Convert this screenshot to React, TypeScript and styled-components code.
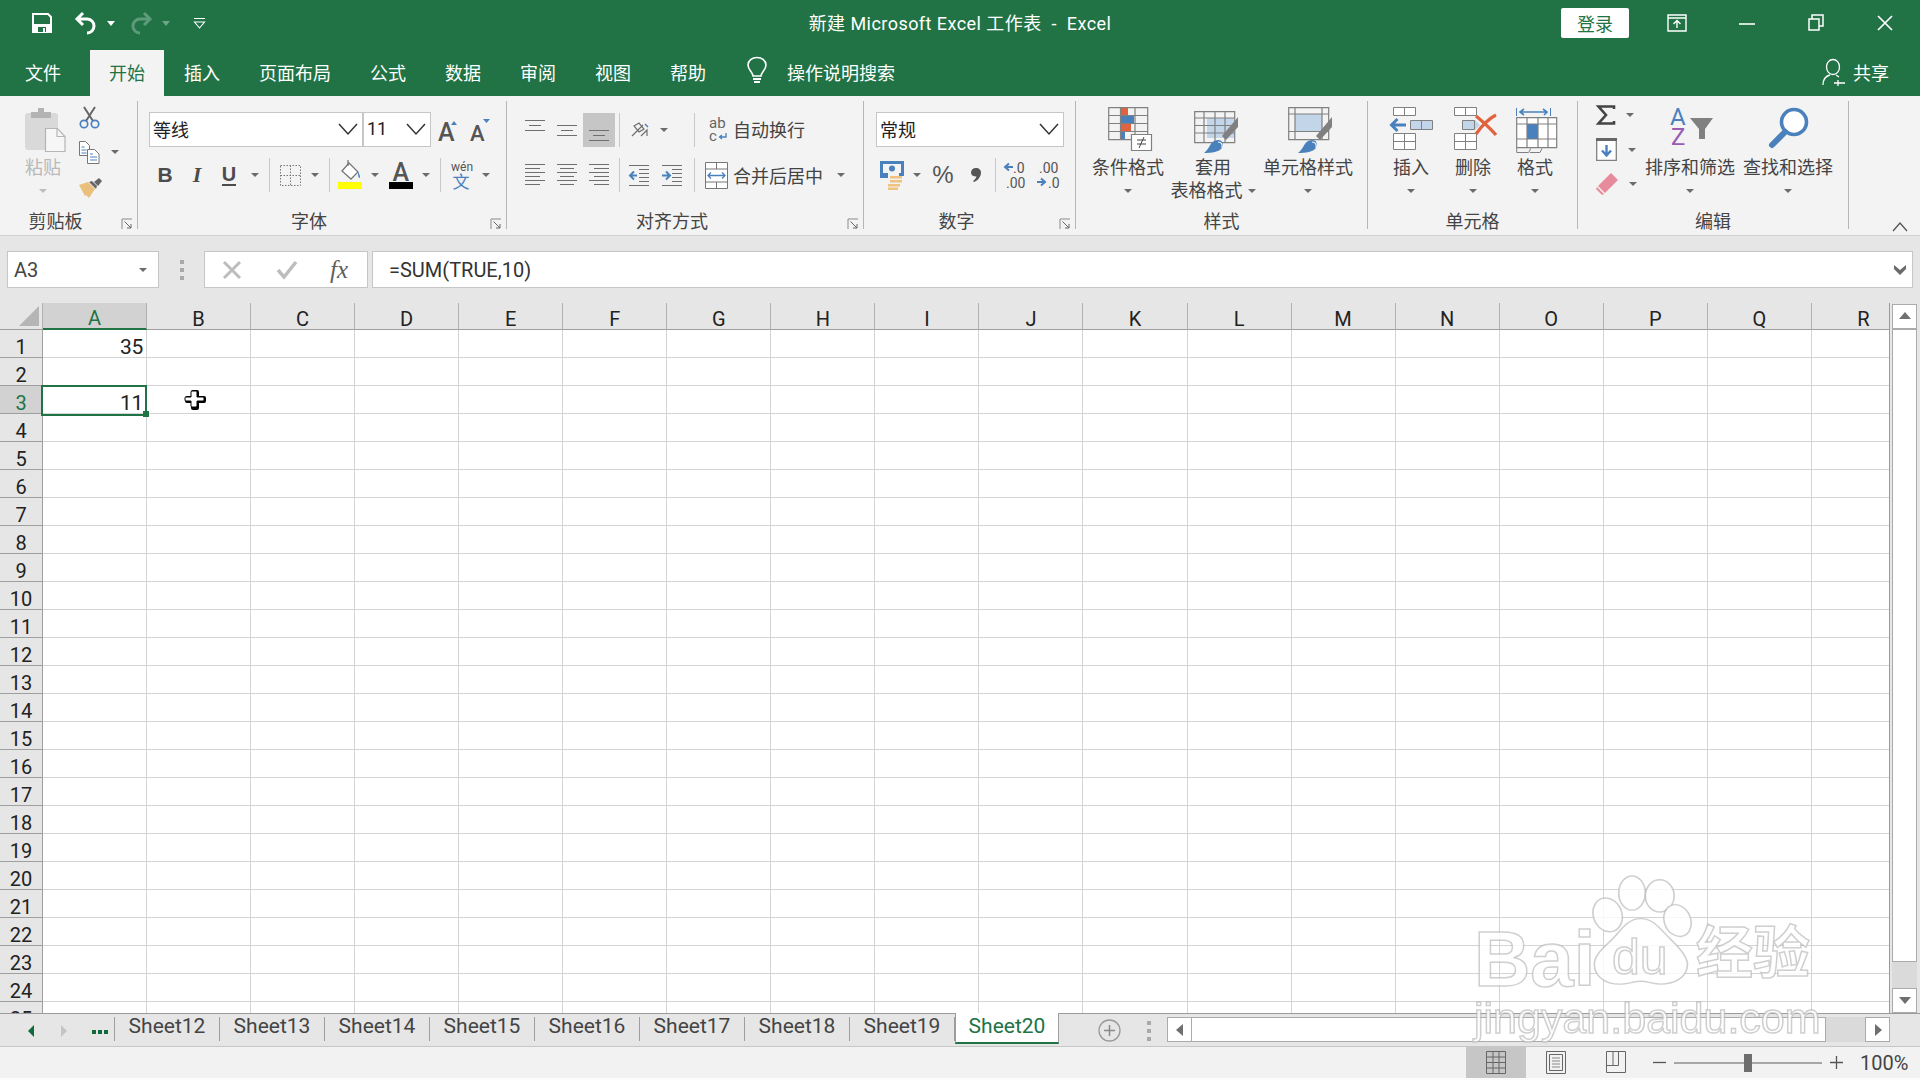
import React from 'react';
import styled, { createGlobalStyle } from 'styled-components';

const GREEN = '#217346';
const BLUE = '#4a81bd';
const PALE = '#c3d5e9';
const GREY = '#808080';
const DARK = '#444444';
const ORANGE = '#e0623f';
const FONT = `Roboto, "Noto Sans CJK SC", sans-serif`;

const COLUMNS = 'ABCDEFGHIJKLMNOPQR'.split('');
const ROWS = Array.from({ length: 25 }, (_, i) => i + 1);
const SHEETS = [12, 13, 14, 15, 16, 17, 18, 19, 20];
const VALUES: Record<string, string> = { A1: '35', A3: '11' };

const GlobalStyle = createGlobalStyle`
  html, body { margin: 0; padding: 0; background: #fff; }
  * { box-sizing: border-box; }
  svg { overflow: visible; }
`;

const Window = styled.div`
  position: relative;
  width: 1920px;
  height: 1080px;
  overflow: hidden;
  display: flex;
  flex-direction: column;
  background: #fbfbfb;
  font-family: ${FONT};
  color: ${DARK};
`;

/* title bar */
const TitleBar = styled.div`
  height: 50px;
  display: grid;
  grid-template-columns: 1fr auto 1fr;
  align-items: center;
  background: ${GREEN};
  color: #fff;
`;
const QuickAccess = styled.div`
  display: flex;
  align-items: center;
  padding-left: 32px;
  padding-bottom: 4px;
`;
const QuickSlot = styled.span<{ $ml?: number }>`
  display: flex;
  margin-left: ${(p) => p.$ml ?? 0}px;
`;
const WhiteCaret = styled.span<{ $ml: number; $dim?: boolean }>`
  margin-left: ${(p) => p.$ml}px;
  border-left: 4px solid transparent;
  border-right: 4px solid transparent;
  border-top: 5px solid ${(p) => (p.$dim ? '#6da58a' : '#fff')};
`;
const Title = styled.div`
  font-size: 18px;
  letter-spacing: 0.45px;
  white-space: pre;
  padding-bottom: 6px;
`;
const WindowControls = styled.div`
  display: flex;
  align-items: center;
  justify-content: flex-end;
  padding-right: 27px;
  padding-bottom: 5px;
`;
const SignIn = styled.button`
  width: 68px;
  height: 30px;
  margin-right: 38px;
  border: 0;
  border-radius: 2px;
  background: #fff;
  color: ${GREEN};
  font: 18px ${FONT};
  padding: 0;
`;
const ControlSlot = styled.span<{ $w: number }>`
  display: flex;
  justify-content: center;
  width: ${(p) => p.$w}px;
`;

/* ribbon tabs */
const TabRow = styled.div`
  height: 46px;
  display: flex;
  align-items: stretch;
  padding-left: 6px;
  background: ${GREEN};
  color: #fff;
  font-size: 18px;
`;
const RibbonTab = styled.div<{ $active?: boolean; $ml?: number }>`
  display: flex;
  align-items: center;
  justify-content: center;
  padding: 0 19px 3px;
  margin-left: ${(p) => p.$ml ?? 0}px;
  margin-right: 1px;
  background: ${(p) => (p.$active ? '#f3f3f3' : 'transparent')};
  color: ${(p) => (p.$active ? GREEN : '#fff')};
`;
const TellMe = styled.div`
  display: flex;
  align-items: center;
  gap: 20px;
  margin-left: 21px;
  padding-bottom: 3px;
`;
const Share = styled.div`
  display: flex;
  align-items: center;
  gap: 8px;
  margin-left: auto;
  margin-right: 31px;
  padding-bottom: 3px;
`;

/* ribbon */
const Ribbon = styled.div`
  position: relative;
  height: 140px;
  display: flex;
  padding: 5px 0 6px;
  background: #f3f3f3;
  border-bottom: 1px solid #d2d2d2;
`;
const Group = styled.section<{ $w: number }>`
  width: ${(p) => p.$w}px;
  display: flex;
  flex-direction: column;
  border-right: 1px solid #b6b6b6;
`;
const GroupBody = styled.div<{ $pl?: number; $row?: boolean }>`
  flex: 1;
  min-height: 0;
  display: flex;
  flex-direction: ${(p) => (p.$row ? 'row' : 'column')};
  padding-left: ${(p) => p.$pl ?? 0}px;
`;
const GroupFooter = styled.div`
  height: 14px;
  display: flex;
  align-items: center;
`;
const GroupLabel = styled.div`
  flex: 1;
  text-align: center;
  font-size: 18px;
  line-height: 14px;
  color: #444;
`;
const Launcher = styled.div`
  width: 26px;
  padding-left: 10px;
  padding-top: 3px;
  display: flex;
`;
const BigButton = styled.div<{ $w: number; $disabled?: boolean }>`
  width: ${(p) => p.$w}px;
  padding-top: 6px;
  display: flex;
  flex-direction: column;
  align-items: center;
  font-size: 18px;
  line-height: 23px;
  color: ${(p) => (p.$disabled ? '#b9b9b9' : '#444')};
`;
const BigIcon = styled.div<{ $dx?: number }>`
  height: 49px;
  display: flex;
  align-items: flex-start;
  justify-content: center;
  padding-left: ${(p) => p.$dx ?? 0}px;
  white-space: nowrap;
`;
const BigLine = styled.div`
  height: 23px;
  display: flex;
  align-items: center;
  gap: 5px;
  white-space: nowrap;
`;
const Caret = styled.span<{ $pale?: boolean }>`
  flex: none;
  display: inline-block;
  border-left: 4px solid transparent;
  border-right: 4px solid transparent;
  border-top: 4px solid ${(p) => (p.$pale ? '#bdbdbd' : '#6b6b6b')};
`;
const SmallColumn = styled.div<{ $w: number; $pt: number; $gap: number; $pl: number }>`
  width: ${(p) => p.$w}px;
  padding-top: ${(p) => p.$pt}px;
  padding-left: ${(p) => p.$pl}px;
  display: flex;
  flex-direction: column;
  gap: ${(p) => p.$gap}px;
`;
const SmallRow = styled.div`
  height: 28px;
  display: flex;
  align-items: center;
  gap: 11px;
`;
const ToolRow = styled.div<{ $h: number; $mt?: number; $ml?: number }>`
  height: ${(p) => p.$h}px;
  margin-top: ${(p) => p.$mt ?? 0}px;
  margin-left: ${(p) => p.$ml ?? 0}px;
  display: flex;
  align-items: center;
  font-size: 18px;
`;
const Tool = styled.div<{ $w: number; $ml?: number; $selected?: boolean }>`
  flex: none;
  width: ${(p) => p.$w}px;
  height: 34px;
  margin-left: ${(p) => p.$ml ?? 0}px;
  display: flex;
  align-items: center;
  justify-content: center;
  background: ${(p) => (p.$selected ? '#c6c6c6' : 'transparent')};
  color: #444;
`;
const CaretSlot = styled.div<{ $w?: number; $ml?: number }>`
  flex: none;
  width: ${(p) => p.$w ?? 10}px;
  margin-left: ${(p) => p.$ml ?? 0}px;
  display: flex;
  justify-content: center;
`;
const Sep = styled.div<{ $ml?: number; $h?: number }>`
  flex: none;
  width: 1px;
  height: ${(p) => p.$h ?? 34}px;
  margin-left: ${(p) => p.$ml ?? 0}px;
  background: #c9c9c9;
`;
const ToolText = styled.span<{ $ml: number; $pb?: number }>`
  margin-left: ${(p) => p.$ml}px;
  padding-bottom: ${(p) => p.$pb ?? 0}px;
  white-space: nowrap;
  font-size: 18px;
  color: #444;
`;
const Combo = styled.div<{ $w: number }>`
  flex: none;
  width: ${(p) => p.$w}px;
  height: 35px;
  display: flex;
  align-items: center;
  justify-content: space-between;
  padding: 0 4px 2px 3px;
  background: #fff;
  border: 1px solid #c6c6c6;
  color: #222;
  font-size: 18px;
`;
const Bold = styled.span`
  font: bold 21px "Liberation Sans", sans-serif;
  color: #4c4c4c;
`;
const Italic = styled.span`
  font: italic bold 22px "Liberation Serif", serif;
  color: #4c4c4c;
`;
const Underlined = styled.span`
  font: bold 20px "Liberation Sans", sans-serif;
  color: #4c4c4c;
  border-bottom: 2px solid #4c4c4c;
  line-height: 19px;
`;
const Percent = styled.span`
  font: 24px "Liberation Sans", sans-serif;
  color: #555;
`;
const CollapseButton = styled.div`
  position: absolute;
  right: 12px;
  bottom: 3px;
  display: flex;
`;

/* formula bar */
const FormulaBar = styled.div`
  height: 67px;
  display: flex;
  align-items: flex-start;
  padding: 15px 7px 0;
  background: #e6e6e6;
`;
const NameBox = styled.div`
  width: 152px;
  height: 37px;
  display: flex;
  align-items: center;
  justify-content: space-between;
  padding: 0 11px 0 6px;
  background: #fff;
  border: 1px solid #c6c6c6;
  font-size: 20px;
`;
const Grip = styled.div`
  width: 45px;
  height: 37px;
  display: flex;
  align-items: center;
  justify-content: center;
`;
const FormulaButtons = styled.div`
  width: 164px;
  height: 37px;
  display: flex;
  align-items: center;
  gap: 36px;
  padding-left: 18px;
  background: #fff;
  border: 1px solid #c6c6c6;
`;
const FxMark = styled.span`
  margin-left: -3px;
  font: italic 25px "Liberation Serif", serif;
  color: #5f5f5f;
`;
const FormulaInput = styled.div`
  flex: 1;
  height: 37px;
  margin-left: 4px;
  display: flex;
  align-items: center;
  justify-content: space-between;
  padding: 0 6px 0 16px;
  background: #fff;
  border: 1px solid #c6c6c6;
  font-size: 20px;
  color: #333;
`;

/* sheet */
const SheetArea = styled.div`
  height: 710px;
  display: flex;
  background: #e6e6e6;
`;
const Grid = styled.div`
  width: 1890px;
  height: 710px;
  overflow: hidden;
  display: grid;
  grid-template-columns: 43px repeat(18, 104.05px);
  grid-template-rows: 27px;
  grid-auto-rows: 28px;
  background: #fff;
  border-right: 1px solid #9b9b9b;
`;
const Corner = styled.div`
  display: flex;
  align-items: flex-end;
  justify-content: flex-end;
  padding: 0 3px 3px 0;
  background: #e6e6e6;
  border-right: 1px solid #b1b1b1;
  border-bottom: 1px solid #9f9f9f;
`;
const ColumnHeader = styled.div<{ $active?: boolean }>`
  display: flex;
  align-items: center;
  justify-content: center;
  padding-top: 5px;
  font-size: 20px;
  background: ${(p) => (p.$active ? '#d2d2d2' : '#e6e6e6')};
  color: ${(p) => (p.$active ? GREEN : '#222')};
  border-right: 1px solid #b1b1b1;
  border-bottom: ${(p) => (p.$active ? `2px solid ${GREEN}` : '1px solid #9f9f9f')};
`;
const RowHeader = styled.div<{ $active?: boolean }>`
  display: flex;
  align-items: center;
  justify-content: center;
  padding-top: 6px;
  font-size: 20px;
  background: ${(p) => (p.$active ? '#d2d2d2' : '#e6e6e6')};
  color: ${(p) => (p.$active ? GREEN : '#222')};
  border-right: 1px solid #9f9f9f;
  border-bottom: 1px solid #9f9f9f;
`;
const Cell = styled.div<{ $active?: boolean }>`
  position: relative;
  display: flex;
  align-items: flex-end;
  justify-content: flex-end;
  padding: 0 3px 0 0;
  font-size: 21px;
  letter-spacing: -0.3px;
  line-height: 20px;
  color: #222;
  border-right: 1px solid #d4d4d4;
  border-bottom: 1px solid #d4d4d4;
  ${(p) =>
    p.$active &&
    `
    &::after {
      content: '';
      position: absolute;
      inset: -1px -1px -3px -2px;
      border: 2px solid ${GREEN};
    }
  `}
`;
const FillHandle = styled.span`
  position: absolute;
  right: -3px;
  bottom: -4px;
  width: 6px;
  height: 6px;
  background: ${GREEN};
  z-index: 2;
`;
const Pointer = styled.span`
  position: absolute;
  left: 37px;
  top: 2px;
  z-index: 2;
  display: flex;
`;
const VScroll = styled.div`
  width: 30px;
  display: flex;
  flex-direction: column;
  padding: 1px 3px 0 2px;
`;
const ScrollButton = styled.div<{ $w?: number }>`
  flex: none;
  width: ${(p) => p.$w ?? 25}px;
  height: 25px;
  display: flex;
  align-items: center;
  justify-content: center;
  background: #fff;
  border: 1px solid #ababab;
`;
const VThumb = styled.div`
  height: 633px;
  margin: 0;
  background: #fff;
  border: 1px solid #ababab;
`;
const VTrack = styled.div`
  flex: 1;
  background: #dadada;
`;

/* sheet tabs */
const TabsBar = styled.div`
  height: 34px;
  display: flex;
  align-items: flex-start;
  background: #e6e6e6;
  border-top: 1px solid #9b9b9b;
  border-bottom: 1px solid #c6c6c6;
`;
const SheetNav = styled.div`
  flex: none;
  width: 115px;
  height: 24px;
  margin-top: 3px;
  display: flex;
  align-items: center;
  padding-top: 4px;
  padding-left: 28px;
  border-right: 1px solid #9e9e9e;
`;
const NavArrow = styled.span<{ $dir: 'left' | 'right'; $ml?: number; $dim?: boolean }>`
  margin-left: ${(p) => p.$ml ?? 0}px;
  border-top: 6px solid transparent;
  border-bottom: 6px solid transparent;
  ${(p) =>
    p.$dir === 'left'
      ? `border-right: 6px solid ${p.$dim ? '#c4c4c4' : '#0f6b3b'};`
      : `border-left: 6px solid ${p.$dim ? '#c4c4c4' : '#0f6b3b'};`}
`;
const NavDots = styled.span`
  margin-left: 25px;
  display: flex;
  gap: 2px;
  padding-top: 1px;
  i {
    width: 4px;
    height: 4px;
    background: #0f6b3b;
  }
`;
const SheetTab = styled.div<{ $active?: boolean }>`
  flex: none;
  display: flex;
  align-items: center;
  justify-content: center;
  font-size: 21px;
  width: 105px;
  margin-top: ${(p) => (p.$active ? '-1px' : '3px')};
  height: ${(p) => (p.$active ? '31px' : '24px')};
  padding-bottom: ${(p) => (p.$active ? '3px' : '6px')};
  background: ${(p) => (p.$active ? '#fff' : 'transparent')};
  color: ${(p) => (p.$active ? GREEN : '#444')};
  border-right: 1px solid #9e9e9e;
  ${(p) =>
    p.$active &&
    `
    width: 104px;
    border-left: 1px solid #9b9b9b;
    border-bottom: 2px solid ${GREEN};
  `}
`;
const AddSheet = styled.div`
  flex: none;
  margin-left: 39px;
  margin-top: 5px;
  display: flex;
`;
const SheetGrip = styled.div`
  flex: none;
  width: 46px;
  height: 24px;
  margin-top: 5px;
  padding-left: 10px;
  display: flex;
  align-items: center;
  justify-content: center;
`;
const HScroll = styled.div`
  width: 723px;
  height: 25px;
  margin-top: 3px;
  display: flex;
  background: #dadada;
`;
const HThumb = styled.div`
  width: 634px;
  background: #fff;
  border: 1px solid #ababab;
  border-left: 0;
`;
const HSpacer = styled.div`
  flex: 1;
`;

/* status bar */
const StatusBar = styled.div`
  height: 31px;
  display: flex;
  align-items: stretch;
  justify-content: flex-end;
  background: #f2f2f2;
  padding-right: 12px;
`;
const ViewButton = styled.div<{ $active?: boolean }>`
  width: 60px;
  display: flex;
  align-items: center;
  justify-content: center;
  background: ${(p) => (p.$active ? '#c6c6c6' : 'transparent')};
`;
const ZoomBar = styled.div`
  width: 262px;
  display: flex;
  align-items: center;
  padding-left: 7px;
  gap: 8px;
`;
const ZoomTrack = styled.div`
  position: relative;
  flex: none;
  width: 148px;
  height: 2px;
  background: #a6a6a6;
`;
const ZoomThumb = styled.span`
  position: absolute;
  left: 70px;
  top: -8px;
  width: 8px;
  height: 18px;
  background: #6e6e6e;
`;
const ZoomValue = styled.span`
  margin-left: 9px;
  font-size: 20px;
  color: #444;
`;

/* watermark on top of the window */
const Watermark = styled.div`
  position: absolute;
  left: 1474px;
  top: 870px;
  width: 346px;
  height: 170px;
  pointer-events: none;
  font-family: "Liberation Sans", "Noto Sans CJK SC", sans-serif;
  color: rgba(255, 255, 255, 0.82);
  -webkit-text-stroke: 1.5px rgba(178, 178, 178, 0.62);
  filter: blur(0.5px);
`;
const MarkText = styled.span<{ $x: number; $y: number; $size: number; $bold?: boolean }>`
  position: absolute;
  left: ${(p) => p.$x}px;
  top: ${(p) => p.$y}px;
  font-size: ${(p) => p.$size}px;
  font-weight: ${(p) => (p.$bold ? 700 : 400)};
  line-height: 1;
  white-space: nowrap;
`;
const MarkPaw = styled.span`
  position: absolute;
  left: 117px;
  top: 5px;
  display: flex;
`;

/* icons */
const SaveIcon = () => (
  <svg width="20" height="20" viewBox="0 0 20 20">
    <path d="M1 1h15l3 3v15H1z" fill="none" stroke="#fff" strokeWidth="2" />
    <path d="M2 11h16v8H2z" fill="#fff" />
    <path d="M6 14h8v5H6z" fill={GREEN} />
    <path d="M11 15h2v4h-2z" fill="#fff" />
  </svg>
);
const UndoIcon = ({ color = '#fff', flip }: { color?: string; flip?: boolean }) => (
  <svg width="22" height="24" viewBox="0 0 22 24">
    <g transform={flip ? 'matrix(-1 0 0 1 22 0)' : undefined}>
      <path d="M8 2L2 8l6 6M2 8h10a7 7 0 0 1 7 7c0 4-3 7-7 7" fill="none" stroke={color} strokeWidth="3" />
    </g>
  </svg>
);
const CustomizeIcon = () => (
  <svg width="13" height="13" viewBox="0 0 13 13">
    <path d="M1 1.5h11M1.5 5h10l-5 6z" fill="none" stroke="#fff" strokeWidth="1.1" />
  </svg>
);
const RibbonModeIcon = () => (
  <svg width="20" height="18" viewBox="0 0 20 18">
    <path d="M1 1h18v16H1z M1 4h18" fill="none" stroke="#fff" strokeWidth="1.4" />
    <path d="M10 14V7M6.5 10L10 6.5l3.5 3.5" fill="none" stroke="#fff" strokeWidth="1.4" />
  </svg>
);
const MinimizeIcon = () => (
  <svg width="16" height="16" viewBox="0 0 16 16">
    <path d="M0 9h16" stroke="#fff" strokeWidth="1.6" />
  </svg>
);
const RestoreIcon = () => (
  <svg width="16" height="17" viewBox="0 0 16 17">
    <path d="M1 5h10v11H1z M4 5V1h11v11h-4" fill="none" stroke="#fff" strokeWidth="1.5" />
  </svg>
);
const CloseIcon = () => (
  <svg width="16" height="16" viewBox="0 0 16 16">
    <path d="M1 1l14 14M15 1L1 15" stroke="#fff" strokeWidth="1.7" />
  </svg>
);
const BulbIcon = () => (
  <svg width="20" height="29" viewBox="0 0 20 29">
    <path d="M6 19c0-4-5-6-5-11a9 7.5 0 0 1 18 0c0 5-5 7-5 11z" fill="none" stroke="#fff" strokeWidth="1.6" />
    <path d="M6 22h8M7 25h6" stroke="#fff" strokeWidth="2" />
  </svg>
);
const PersonIcon = () => (
  <svg width="23" height="28" viewBox="0 0 23 28">
    <ellipse cx="11" cy="9" rx="6.5" ry="7.5" fill="none" stroke="#fff" strokeWidth="1.3" />
    <path d="M1 27c0-6 3-9 7-10M14 17l3 2M16 22v6M12 25h11" fill="none" stroke="#fff" strokeWidth="1.3" />
  </svg>
);
const LauncherIcon = () => (
  <svg width="12" height="12" viewBox="0 0 12 12">
    <path d="M1 11V1h10" fill="none" stroke="#8b8b8b" />
    <path d="M3.5 3.5L10 10M10 6v4H6" fill="none" stroke="#666" />
  </svg>
);
const BigChevron = () => (
  <svg width="20" height="12" viewBox="0 0 20 12">
    <path d="M1 1l9 10 9-10" fill="none" stroke="#333" strokeWidth="1.5" />
  </svg>
);
const PasteIcon = () => (
  <svg width="42" height="46" viewBox="0 0 42 46">
    <rect x="0" y="6" width="33" height="37" rx="3" fill="#d9d9d9" />
    <path d="M6 5h7V1h6v4h7v6H6z" fill="#b3b3b3" />
    <path d="M20.5 21.5h12l7.5 8v15H20.5z" fill="#f6f6f6" stroke="#b5b5b5" strokeWidth="1.2" />
    <path d="M32 21.5v8h8" fill="none" stroke="#b5b5b5" strokeWidth="1.2" />
  </svg>
);
const CutIcon = () => (
  <svg width="21" height="23" viewBox="0 0 21 23">
    <path d="M5 1l9 14M16 1L7 15" stroke="#666" strokeWidth="2" />
    <circle cx="5" cy="18" r="3.7" fill="none" stroke={BLUE} strokeWidth="1.7" />
    <circle cx="16" cy="18" r="3.7" fill="none" stroke={BLUE} strokeWidth="1.7" />
  </svg>
);
const CopyIcon = () => (
  <svg width="21" height="23" viewBox="0 0 21 23">
    <path d="M.5.5h6l4 4v10H.5z" fill="#fff" stroke="#777" />
    <path d="M8.5 8.5h7l4.5 4.5v9.5H8.5z" fill="#fff" stroke="#777" />
    <path d="M2.5 6h3M2.5 9h5M2.5 12h5M11 13h3M11 16h7M11 19h7" stroke={BLUE} strokeWidth="1.2" />
  </svg>
);
const BrushIcon = () => (
  <svg width="24" height="21" viewBox="0 0 24 21">
    <path d="M0 8l9-3 7 7-6 9-3-3-1 1z" fill="#eac07c" />
    <path d="M10 5l7 7 1-3-5-5z" fill="#666" />
    <path d="M15 5l5-4 3 3-4 5z" fill="#666" />
  </svg>
);
const GrowIcon = ({ up }: { up: boolean }) => (
  <svg width="20" height="26" viewBox="0 0 20 26">
    <text x="0" y="24" fontFamily="Roboto" fontWeight="500" fontSize={up ? 25 : 22} fill="#555">A</text>
    <path d={up ? 'M13 8l3-4 3 4z' : 'M13 2h7l-3.5 4z'} fill={BLUE} />
  </svg>
);
const BordersIcon = () => (
  <svg width="21" height="21" viewBox="0 0 21 21">
    <path d="M.5.5h20v20H.5z M10.5.5v20 M.5 10.5h20" fill="none" stroke="#777" strokeDasharray="1.5 1.5" />
  </svg>
);
const FillIcon = () => (
  <svg width="24" height="30" viewBox="0 0 24 30">
    <path d="M4 11l7-8 9 9-7 7z" fill="#fff" stroke="#777" strokeWidth="1.3" />
    <path d="M10 0v6" stroke="#777" strokeWidth="1.3" />
    <path d="M20 12c2 2 2 5 2 6-2 0-2-3-2-6z" fill={BLUE} />
    <path d="M0 22h24v7H0z" fill="#ffff00" />
  </svg>
);
const FontColorIcon = () => (
  <svg width="24" height="30" viewBox="0 0 24 30">
    <text x="3.5" y="21" fontFamily="Roboto" fontWeight="500" fontSize="25" fill="#555">A</text>
    <path d="M0 22h24v7H0z" fill="#000" />
  </svg>
);
const PhoneticIcon = () => (
  <svg width="21" height="30" viewBox="0 0 21 30">
    <text x="0" y="11" fontFamily="Roboto" fontSize="12" fill="#555">wén</text>
    <text x="1.5" y="28" fontFamily="Noto Sans CJK SC" fontSize="17" fill={BLUE}>文</text>
  </svg>
);
const LineIcon = ({ lines, h }: { lines: [number, number, number][]; h: number }) => (
  <svg width="21" height={h} viewBox={`0 0 21 ${h}`}>
    {lines.map(([a, b, y]) => (
      <path key={y} d={`M${a} ${y + 0.5}H${b}`} stroke="#6f6f6f" />
    ))}
  </svg>
);
const verticalLines = (y: number): [number, number, number][] => [
  [0, 20, y],
  [4, 16, y + 5],
  [0, 20, y + 10],
];
const horizontalLines = (kind: 'left' | 'center' | 'right'): [number, number, number][] =>
  [0, 1, 2, 3, 4, 5].map((i) => {
    const short = i % 2 === 1;
    if (!short) return [0, 20, i * 4];
    if (kind === 'left') return [0, 15, i * 4];
    if (kind === 'right') return [5, 20, i * 4];
    return [3, 17, i * 4];
  });
const OrientationIcon = () => (
  <svg width="20" height="20" viewBox="0 0 20 20">
    <path d="M1 16L12 5" stroke="#6f6f6f" strokeWidth="1.2" />
    <path d="M3 6l5-3 5 6-5 3zM10 16l6-6v6" fill="none" stroke="#6f6f6f" strokeWidth="1.2" />
    <path d="M14 4l3 3" stroke={BLUE} strokeWidth="1.5" />
  </svg>
);
const WrapIcon = () => (
  <svg width="20" height="26" viewBox="0 0 20 26">
    <text x="0" y="11" fontFamily="Roboto" fontSize="15" fill="#666">ab</text>
    <text x="0" y="24" fontFamily="Roboto" fontSize="15" fill="#666">c</text>
    <path d="M17 16v4h-6M13 18l-2.5 2 2.5 2" fill="none" stroke={BLUE} strokeWidth="1.3" />
  </svg>
);
const IndentIcon = ({ flip }: { flip?: boolean }) => (
  <svg width="22" height="21" viewBox="0 0 22 21">
    <path d="M1 .5h20M11 4.5h10M11 8.5h10M11 12.5h10M11 16.5h10M1 20.5h20" stroke="#6f6f6f" />
    <path d={flip ? 'M1 10.5h7M5 6.5l4 4-4 4' : 'M9 10.5H2M6 6.5l-4 4 4 4'} fill="none" stroke={BLUE} strokeWidth="2" />
  </svg>
);
const MergeIcon = () => (
  <svg width="23" height="27" viewBox="0 0 23 27">
    <path d="M.5.5h22v26H.5z M.5 7h22M.5 20h22M11.5.5V7M11.5 20v6.5" fill="#fff" stroke="#777" />
    <path d="M3 13.5h17M6 10.5l-3 3 3 3M17 10.5l3 3-3 3" fill="none" stroke={BLUE} strokeWidth="1.3" />
  </svg>
);
const CurrencyIcon = () => (
  <svg width="24" height="29" viewBox="0 0 24 29">
    <path d="M0 0h24v15h-5v-3h2V3H3v9h5v5H0z" fill={BLUE} />
    <circle cx="12" cy="7.5" r="3" fill={BLUE} />
    <path d="M10 15h12v2.5H10zM10 19h12v2.5H10zM8 23h12v2.5H8zM8 26.5h10V29H8z" fill="#efc27f" />
  </svg>
);
const CommaIcon = () => (
  <svg width="10" height="14" viewBox="0 0 10 14">
    <path d="M5 0c3 0 5 2 5 4.5 0 4-3 8-7 9.5l-1-1c2-1.5 3-3 3.500-4.500C2 8.500 0 7 0 4.500S2 0 5 0z" fill="#555" />
  </svg>
);
const DecimalMoreIcon = () => (
  <svg width="25" height="28" viewBox="0 0 25 28">
    <text x="9" y="12" fontFamily="Roboto" fontSize="14" fill="#555">.0</text>
    <text x="2" y="27" fontFamily="Roboto" fontSize="14" fill="#555">.00</text>
    <path d="M9 6H1M5 2.5L1 6l4 3.5" fill="none" stroke={BLUE} strokeWidth="2" />
  </svg>
);
const DecimalLessIcon = () => (
  <svg width="25" height="28" viewBox="0 0 25 28">
    <text x="2" y="12" fontFamily="Roboto" fontSize="14" fill="#555">.00</text>
    <text x="11" y="27" fontFamily="Roboto" fontSize="14" fill="#555">.0</text>
    <path d="M0 21h8M4 17.5L8 21l-4 3.5" fill="none" stroke={BLUE} strokeWidth="2" />
  </svg>
);
const ConditionalIcon = () => (
  <svg width="44" height="44" viewBox="0 0 44 44">
    <path d="M12 0h8v8h-8z M12 16h11v8H12z" fill={ORANGE} />
    <path d="M12 8h14v8H12z M12 24h5v9h-5z" fill={BLUE} />
    <path d="M.7.7h39v32H.7z M.7 8.5h39M.7 16.5h39M.7 24.5h39M12.5.7v32M27 .7v32" fill="none" stroke={GREY} strokeWidth="1.2" />
    <path d="M23.5 27.5h20v16h-20z" fill="#fff" stroke={GREY} strokeWidth="1.2" />
    <path d="M29 33h9M29 37h9M36 30l-5 11" fill="none" stroke="#444" />
  </svg>
);
const TableStyleIcon = () => (
  <svg width="46" height="46" viewBox="0 0 46 46">
    <path d="M13 11h27v20H13z" fill={PALE} />
    <path d="M.7 4.7h40v31H.7z M.7 11h40M.7 18.5h40M.7 26h40M10 4.7v31M21 4.7v31M31 4.7v31" fill="none" stroke={GREY} strokeWidth="1.2" />
    <path d="M44 10L28 29l4 4 12-13z" fill={GREY} />
    <path d="M10 46c6-4 6-13 14-13 5 0 6 5 4 8-3 4-10 5-18 5z" fill={BLUE} />
    <path d="M24 35c3 0 5 2 4 6" fill="none" stroke="#fff" strokeWidth="1.2" />
  </svg>
);
const CellStyleIcon = () => (
  <svg width="46" height="46" viewBox="0 0 46 46">
    <path d="M7 7h27v17H7z" fill={PALE} />
    <path d="M.7.7h40v32H.7z M.7 7h40M.7 24.5h40M7 .7v32M34 .7v32" fill="none" stroke={GREY} strokeWidth="1.2" />
    <path d="M44 10L28 29l4 4 12-13z" fill={GREY} />
    <path d="M10 46c6-4 6-13 14-13 5 0 6 5 4 8-3 4-10 5-18 5z" fill={BLUE} />
    <path d="M24 35c3 0 5 2 4 6" fill="none" stroke="#fff" strokeWidth="1.2" />
  </svg>
);
const InsertIcon = () => (
  <svg width="44" height="44" viewBox="0 0 44 44">
    <path d="M3.5.5h22v8h-22z M14.5.5v8 M3.5 26.5h22v16h-22z M3.5 34.5h22M14.5 26.5v16" fill="#fff" stroke={GREY} />
    <path d="M20.5 13.5h22v9h-22z" fill={PALE} stroke={GREY} />
    <path d="M31.5 13.5v9" stroke={GREY} />
    <path d="M16 18H2M7.5 12L1.5 18l6 6" fill="none" stroke={BLUE} strokeWidth="3" />
  </svg>
);
const DeleteIcon = () => (
  <svg width="44" height="44" viewBox="0 0 44 44">
    <path d="M.5.5h22v8H.5z M11.5.5v8 M.5 26.5h22v16H.5z M.5 34.5h22M11.5 26.5v16" fill="#fff" stroke={GREY} />
    <path d="M8.5 13.5h12v9h-12z" fill={PALE} stroke={GREY} />
    <path d="M21 13l5 5-5 5z" fill={PALE} />
    <path d="M22 9c6 5 14 12 20 19M42 8C34 12 27 20 22 27" fill="none" stroke={ORANGE} strokeWidth="3.2" />
  </svg>
);
const FormatIcon = () => (
  <svg width="42" height="46" viewBox="0 0 42 46">
    <path d="M.5 1v8M34.5 1v8" stroke={BLUE} />
    <path d="M4 5h27M8 2L4 5l4 3M27 2l4 3-3 3" fill="none" stroke={BLUE} strokeWidth="1.6" />
    <path d="M.7 10.7h40v30H.7z" fill="#fff" />
    <path d="M11 17h11v15H11z" fill={BLUE} />
    <path d="M.7 10.7h40v30H.7z M.7 17h40M.7 32h40M11 10.7v30M22 10.7v30M32 10.7v30" fill="none" stroke={GREY} strokeWidth="1.2" />
    <path d="M.7 41v4.5h12l2-4M14 45.5h10l2-4" fill="none" stroke={GREY} />
  </svg>
);
const SigmaIcon = () => (
  <svg width="19" height="20" viewBox="0 0 19 20">
    <path d="M18 4V1.5H2.5L10 10l-7.5 8.5H18V16" fill="none" stroke="#444" strokeWidth="2.6" />
  </svg>
);
const FillDownIcon = () => (
  <svg width="21" height="23" viewBox="0 0 21 23">
    <path d="M.7.7h19.6v21.6H.7z" fill="#fff" stroke={GREY} strokeWidth="1.3" />
    <path d="M0 0h21v3H0z" fill="#666" />
    <path d="M10.5 7v10M6 12.5l4.5 5 4.5-5" fill="none" stroke={BLUE} strokeWidth="2.4" />
  </svg>
);
const EraserIcon = () => (
  <svg width="22" height="22" viewBox="0 0 22 22">
    <path d="M15 0l7 7L9 20 2 13z" fill="#e78b9c" />
    <path d="M1 14l7 7-2 1-6-6z" fill="#e78b9c" />
  </svg>
);
const SortIcon = () => (
  <svg width="44" height="40" viewBox="0 0 44 40">
    <text x="0" y="18" fontFamily="Roboto" fontSize="24" fill={BLUE}>A</text>
    <text x="1" y="38" fontFamily="Roboto" fontSize="24" fill="#9a5bb5">Z</text>
    <path d="M20 11h23l-8 11v10h-6V22z" fill={GREY} />
  </svg>
);
const FindIcon = () => (
  <svg width="40" height="42" viewBox="0 0 40 42">
    <circle cx="26" cy="15" r="12.5" fill="#fff" stroke={BLUE} strokeWidth="3.6" />
    <path d="M17 25L4 38" stroke={BLUE} strokeWidth="6" strokeLinecap="round" />
  </svg>
);
const UpChevron = () => (
  <svg width="16" height="10" viewBox="0 0 16 10">
    <path d="M1 9l7-8 7 8" fill="none" stroke="#555" strokeWidth="1.3" />
  </svg>
);
const GripDots = () => (
  <svg width="4" height="20" viewBox="0 0 4 20">
    <path d="M0 0h4v4H0zM0 8h4v4H0zM0 16h4v4H0z" fill="#a9a9a9" />
  </svg>
);
const CancelIcon = () => (
  <svg width="18" height="18" viewBox="0 0 18 18">
    <path d="M1 1l16 16M17 1L1 17" stroke="#bdbdbd" strokeWidth="3" />
  </svg>
);
const EnterIcon = () => (
  <svg width="20" height="18" viewBox="0 0 20 18">
    <path d="M1 9l6 7L19 1" fill="none" stroke="#bdbdbd" strokeWidth="3.5" />
  </svg>
);
const DoubleCaret = () => (
  <svg width="12" height="10" viewBox="0 0 12 10">
    <path d="M0 0l6 5 6-5v4l-6 6-6-6z" fill="#6b6b6b" />
  </svg>
);
const CornerMark = () => (
  <svg width="20" height="20" viewBox="0 0 20 20">
    <path d="M20 0v20H0z" fill="#b5b5b5" />
  </svg>
);
const CrossCursor = () => (
  <svg width="23" height="23" viewBox="0 0 23 23">
    <path d="M9 2h4a2 2 0 0 1 2 2v4h5a2 2 0 0 1 2 2v3a2 2 0 0 1-2 2h-5v5a2 2 0 0 1-2 2H9a2 2 0 0 1-2-2v-5H3a2 2 0 0 1-2-2v-3a2 2 0 0 1 2-2h4V4a2 2 0 0 1 2-2z" fill="#000" />
    <path d="M8 3h4a1 1 0 0 1 1 1v5h6a1 1 0 0 1 1 1v2a1 1 0 0 1-1 1h-6v5a1 1 0 0 1-1 1H8a1 1 0 0 1-1-1v-5H2a1 1 0 0 1-1-1v-2a1 1 0 0 1 1-1h5V4a1 1 0 0 1 1-1z" fill="#fff" stroke="#000" />
  </svg>
);
const AddSheetIcon = () => (
  <svg width="23" height="23" viewBox="0 0 23 23">
    <circle cx="11.5" cy="11.5" r="10.5" fill="none" stroke="#9a9a9a" strokeWidth="1.3" />
    <path d="M6 11.5h11M11.5 6v11" stroke="#8a8a8a" strokeWidth="1.5" />
  </svg>
);
const SmallTriangle = ({ dir }: { dir: 'up' | 'down' | 'left' | 'right' }) => {
  const d = { up: 'M0 8l6-7 6 7z', down: 'M0 2h12L6 9z', left: 'M9 0v12L2 6z', right: 'M3 0v12l7-6z' }[dir];
  return (
    <svg width="12" height="12" viewBox="0 0 12 12">
      <path d={d} fill="#6f6f6f" />
    </svg>
  );
};
const NormalViewIcon = () => (
  <svg width="20" height="23" viewBox="0 0 20 23">
    <path d="M.5.5h19v22H.5z M.5 6h19M.5 11.5h19M.5 17h19M7 .5v22M13 .5v22" fill="none" stroke="#666" />
  </svg>
);
const PageViewIcon = () => (
  <svg width="20" height="23" viewBox="0 0 20 23">
    <path d="M.5.5h19v22H.5z M3.5 3.5h13v16h-13z" fill="none" stroke="#666" />
    <path d="M6 7h8M6 10h8M6 13h8M6 16h8" stroke="#888" />
  </svg>
);
const BreakViewIcon = () => (
  <svg width="20" height="23" viewBox="0 0 20 23">
    <path d="M.5.5h19v21H.5z M.5 14.5h12V.5M7 .5v14" fill="none" stroke="#666" />
  </svg>
);
const ZoomSign = ({ plus }: { plus?: boolean }) => (
  <svg width="13" height="13" viewBox="0 0 13 13">
    <path d={plus ? 'M0 6.5h13M6.5 0v13' : 'M0 6.5h13'} stroke="#555" strokeWidth="1.3" />
  </svg>
);
const PawMark = () => (
  <svg width="102" height="112" viewBox="0 0 92 118" preserveAspectRatio="none">
    <g fill="rgba(255,255,255,.82)" stroke="rgba(178,178,178,.62)" strokeWidth="1.5">
      <ellipse cx="15" cy="42" rx="13" ry="18" transform="rotate(-12 15 42)" />
      <ellipse cx="37" cy="19" rx="12" ry="18" />
      <ellipse cx="62" cy="22" rx="13" ry="17" />
      <ellipse cx="78" cy="48" rx="12" ry="17" transform="rotate(-14 78 48)" />
      <path d="M45 46c12 0 18 12 27 22 8 9 15 18 15 26 0 14-12 21-24 21-7 0-12-3-18-3s-12 3-19 3c-14 0-23-9-23-21 0-9 7-16 15-25 9-10 14-23 27-23z" />
    </g>
  </svg>
);

const App = () => (
  <Window>
    <GlobalStyle />
    <TitleBar>
      <QuickAccess>
        <SaveIcon />
        <QuickSlot $ml={23}><UndoIcon /></QuickSlot>
        <WhiteCaret $ml={10} />
        <QuickSlot $ml={15}><UndoIcon flip color="#5d9b7b" /></QuickSlot>
        <WhiteCaret $ml={10} $dim />
        <QuickSlot $ml={23}><CustomizeIcon /></QuickSlot>
      </QuickAccess>
      <Title>新建 Microsoft Excel 工作表  -  Excel</Title>
      <WindowControls>
        <SignIn>登录</SignIn>
        <ControlSlot $w={20}><RibbonModeIcon /></ControlSlot>
        <ControlSlot $w={52} />
        <ControlSlot $w={16}><MinimizeIcon /></ControlSlot>
        <ControlSlot $w={53} />
        <ControlSlot $w={16}><RestoreIcon /></ControlSlot>
        <ControlSlot $w={53} />
        <ControlSlot $w={16}><CloseIcon /></ControlSlot>
      </WindowControls>
    </TitleBar>

    <TabRow>
      <RibbonTab>文件</RibbonTab>
      <RibbonTab $active $ml={9}>开始</RibbonTab>
      <RibbonTab>插入</RibbonTab>
      <RibbonTab>页面布局</RibbonTab>
      <RibbonTab>公式</RibbonTab>
      <RibbonTab>数据</RibbonTab>
      <RibbonTab>审阅</RibbonTab>
      <RibbonTab>视图</RibbonTab>
      <RibbonTab>帮助</RibbonTab>
      <TellMe>
        <BulbIcon />
        操作说明搜索
      </TellMe>
      <Share>
        <PersonIcon />
        共享
      </Share>
    </TabRow>

    <Ribbon>
      <Group $w={138}>
        <GroupBody $row $pl={15}>
          <BigButton $w={56} $disabled>
            <BigIcon $dx={6}><PasteIcon /></BigIcon>
            <BigLine>粘贴</BigLine>
            <BigLine><Caret $pale /></BigLine>
          </BigButton>
          <SmallColumn $w={62} $pt={2} $gap={7} $pl={8}>
            <SmallRow><CutIcon /></SmallRow>
            <SmallRow><CopyIcon /><Caret /></SmallRow>
            <SmallRow><BrushIcon /></SmallRow>
          </SmallColumn>
        </GroupBody>
        <GroupFooter><GroupLabel>剪贴板</GroupLabel><Launcher><LauncherIcon /></Launcher></GroupFooter>
      </Group>

      <Group $w={369}>
        <GroupBody $pl={11}>
          <ToolRow $h={35} $mt={11}>
            <Combo $w={214}>等线<BigChevron /></Combo>
            <Combo $w={68}>11<BigChevron /></Combo>
            <Tool $w={20} $ml={7}><GrowIcon up /></Tool>
            <Tool $w={20} $ml={12}><GrowIcon up={false} /></Tool>
          </ToolRow>
          <ToolRow $h={34} $mt={11}>
            <Tool $w={32}><Bold>B</Bold></Tool>
            <Tool $w={32}><Italic>I</Italic></Tool>
            <Tool $w={32}><Underlined>U</Underlined></Tool>
            <CaretSlot $w={20}><Caret /></CaretSlot>
            <Sep $ml={4} />
            <Tool $w={40}><BordersIcon /></Tool>
            <CaretSlot><Caret /></CaretSlot>
            <Sep $ml={9} />
            <Tool $w={40}><FillIcon /></Tool>
            <CaretSlot><Caret /></CaretSlot>
            <Tool $w={40} $ml={1}><FontColorIcon /></Tool>
            <CaretSlot><Caret /></CaretSlot>
            <Sep $ml={9} />
            <Tool $w={40}><PhoneticIcon /></Tool>
            <CaretSlot><Caret /></CaretSlot>
          </ToolRow>
        </GroupBody>
        <GroupFooter><GroupLabel>字体</GroupLabel><Launcher><LauncherIcon /></Launcher></GroupFooter>
      </Group>

      <Group $w={357}>
        <GroupBody $pl={12}>
          <ToolRow $h={35} $mt={11}>
            <Tool $w={32}><LineIcon h={22} lines={verticalLines(1)} /></Tool>
            <Tool $w={32}><LineIcon h={22} lines={verticalLines(6)} /></Tool>
            <Tool $w={32} $selected><LineIcon h={26} lines={verticalLines(13)} /></Tool>
            <Sep $ml={4} />
            <Tool $w={36} $ml={3}><OrientationIcon /></Tool>
            <CaretSlot><Caret /></CaretSlot>
            <Sep $ml={25} />
            <Tool $w={20} $ml={14}><WrapIcon /></Tool>
            <ToolText $ml={4} $pb={2}>自动换行</ToolText>
          </ToolRow>
          <ToolRow $h={34} $mt={11}>
            <Tool $w={32}><LineIcon h={22} lines={horizontalLines('left')} /></Tool>
            <Tool $w={32}><LineIcon h={22} lines={horizontalLines('center')} /></Tool>
            <Tool $w={32}><LineIcon h={22} lines={horizontalLines('right')} /></Tool>
            <Sep $ml={4} />
            <Tool $w={32} $ml={3}><IndentIcon /></Tool>
            <Tool $w={32} $ml={1}><IndentIcon flip /></Tool>
            <Sep $ml={6} />
            <Tool $w={23} $ml={10}><MergeIcon /></Tool>
            <ToolText $ml={5}>合并后居中</ToolText>
            <CaretSlot $ml={13}><Caret /></CaretSlot>
          </ToolRow>
        </GroupBody>
        <GroupFooter><GroupLabel>对齐方式</GroupLabel><Launcher><LauncherIcon /></Launcher></GroupFooter>
      </Group>

      <Group $w={212}>
        <GroupBody $pl={12}>
          <ToolRow $h={35} $mt={11}>
            <Combo $w={188}>常规<BigChevron /></Combo>
          </ToolRow>
          <ToolRow $h={34} $mt={11}>
            <Tool $w={24} $ml={4}><CurrencyIcon /></Tool>
            <CaretSlot $ml={8}><Caret /></CaretSlot>
            <Tool $w={24} $ml={9}><Percent>%</Percent></Tool>
            <Tool $w={10} $ml={16}><CommaIcon /></Tool>
            <Sep $ml={14} />
            <Tool $w={25} $ml={8}><DecimalMoreIcon /></Tool>
            <Tool $w={25} $ml={8}><DecimalLessIcon /></Tool>
          </ToolRow>
        </GroupBody>
        <GroupFooter><GroupLabel>数字</GroupLabel><Launcher><LauncherIcon /></Launcher></GroupFooter>
      </Group>

      <Group $w={292}>
        <GroupBody $row $pl={12}>
          <BigButton $w={80}>
            <BigIcon $dx={4}><ConditionalIcon /></BigIcon>
            <BigLine>条件格式</BigLine>
            <BigLine><Caret /></BigLine>
          </BigButton>
          <BigButton $w={90}>
            <BigIcon $dx={7}><TableStyleIcon /></BigIcon>
            <BigLine>套用</BigLine>
            <BigLine>表格格式<Caret /></BigLine>
          </BigButton>
          <BigButton $w={100}>
            <BigIcon $dx={5}><CellStyleIcon /></BigIcon>
            <BigLine>单元格样式</BigLine>
            <BigLine><Caret /></BigLine>
          </BigButton>
        </GroupBody>
        <GroupFooter><GroupLabel>样式</GroupLabel></GroupFooter>
      </Group>

      <Group $w={210}>
        <GroupBody $row $pl={12}>
          <BigButton $w={62}>
            <BigIcon $dx={2}><InsertIcon /></BigIcon>
            <BigLine>插入</BigLine>
            <BigLine><Caret /></BigLine>
          </BigButton>
          <BigButton $w={62}>
            <BigIcon $dx={6}><DeleteIcon /></BigIcon>
            <BigLine>删除</BigLine>
            <BigLine><Caret /></BigLine>
          </BigButton>
          <BigButton $w={62}>
            <BigIcon $dx={4}><FormatIcon /></BigIcon>
            <BigLine>格式</BigLine>
            <BigLine><Caret /></BigLine>
          </BigButton>
        </GroupBody>
        <GroupFooter><GroupLabel>单元格</GroupLabel></GroupFooter>
      </Group>

      <Group $w={271}>
        <GroupBody $row>
          <SmallColumn $w={63} $pt={0} $gap={6.5} $pl={18}>
            <SmallRow><SigmaIcon /><Caret /></SmallRow>
            <SmallRow><FillDownIcon /><Caret /></SmallRow>
            <SmallRow><EraserIcon /><Caret /></SmallRow>
          </SmallColumn>
          <BigButton $w={98}>
            <BigIcon $dx={4}><SortIcon /></BigIcon>
            <BigLine>排序和筛选</BigLine>
            <BigLine><Caret /></BigLine>
          </BigButton>
          <BigButton $w={98}>
            <BigIcon><FindIcon /></BigIcon>
            <BigLine>查找和选择</BigLine>
            <BigLine><Caret /></BigLine>
          </BigButton>
        </GroupBody>
        <GroupFooter><GroupLabel>编辑</GroupLabel></GroupFooter>
      </Group>
      <CollapseButton><UpChevron /></CollapseButton>
    </Ribbon>

    <FormulaBar>
      <NameBox>A3<Caret /></NameBox>
      <Grip><GripDots /></Grip>
      <FormulaButtons>
        <CancelIcon />
        <EnterIcon />
        <FxMark>fx</FxMark>
      </FormulaButtons>
      <FormulaInput>=SUM(TRUE,10)<DoubleCaret /></FormulaInput>
    </FormulaBar>

    <SheetArea>
      <Grid>
        <Corner><CornerMark /></Corner>
        {COLUMNS.map((c) => (
          <ColumnHeader key={c} $active={c === 'A'}>{c}</ColumnHeader>
        ))}
        {ROWS.map((r) => (
          <React.Fragment key={r}>
            <RowHeader $active={r === 3}>{r}</RowHeader>
            {COLUMNS.map((c) => {
              const ref = `${c}${r}`;
              return (
                <Cell key={ref} $active={ref === 'A3'}>
                  {VALUES[ref]}
                  {ref === 'A3' && <FillHandle />}
                  {ref === 'B3' && <Pointer><CrossCursor /></Pointer>}
                </Cell>
              );
            })}
          </React.Fragment>
        ))}
      </Grid>
      <VScroll>
        <ScrollButton><SmallTriangle dir="up" /></ScrollButton>
        <VThumb />
        <VTrack />
        <ScrollButton><SmallTriangle dir="down" /></ScrollButton>
      </VScroll>
    </SheetArea>

    <TabsBar>
      <SheetNav>
        <NavArrow $dir="left" />
        <NavArrow $dir="right" $ml={27} $dim />
        <NavDots><i /><i /><i /></NavDots>
      </SheetNav>
      {SHEETS.map((n) => (
        <SheetTab key={n} $active={n === 20}>Sheet{n}</SheetTab>
      ))}
      <AddSheet><AddSheetIcon /></AddSheet>
      <SheetGrip><GripDots /></SheetGrip>
      <HScroll>
        <ScrollButton $w={25}><SmallTriangle dir="left" /></ScrollButton>
        <HThumb />
        <HSpacer />
        <ScrollButton $w={25}><SmallTriangle dir="right" /></ScrollButton>
      </HScroll>
    </TabsBar>

    <StatusBar>
      <ViewButton $active><NormalViewIcon /></ViewButton>
      <ViewButton><PageViewIcon /></ViewButton>
      <ViewButton><BreakViewIcon /></ViewButton>
      <ZoomBar>
        <ZoomSign />
        <ZoomTrack><ZoomThumb /></ZoomTrack>
        <ZoomSign plus />
        <ZoomValue>100%</ZoomValue>
      </ZoomBar>
    </StatusBar>

    <Watermark>
      <MarkText $x={0} $y={50} $size={78} $bold>Bai</MarkText>
      <MarkPaw><PawMark /></MarkPaw>
      <MarkText $x={138} $y={62} $size={50}>du</MarkText>
      <MarkText $x={222} $y={55} $size={57} $bold>经验</MarkText>
      <MarkText $x={0} $y={127} $size={43}>jingyan.baidu.com</MarkText>
    </Watermark>
  </Window>
);

export default App;
